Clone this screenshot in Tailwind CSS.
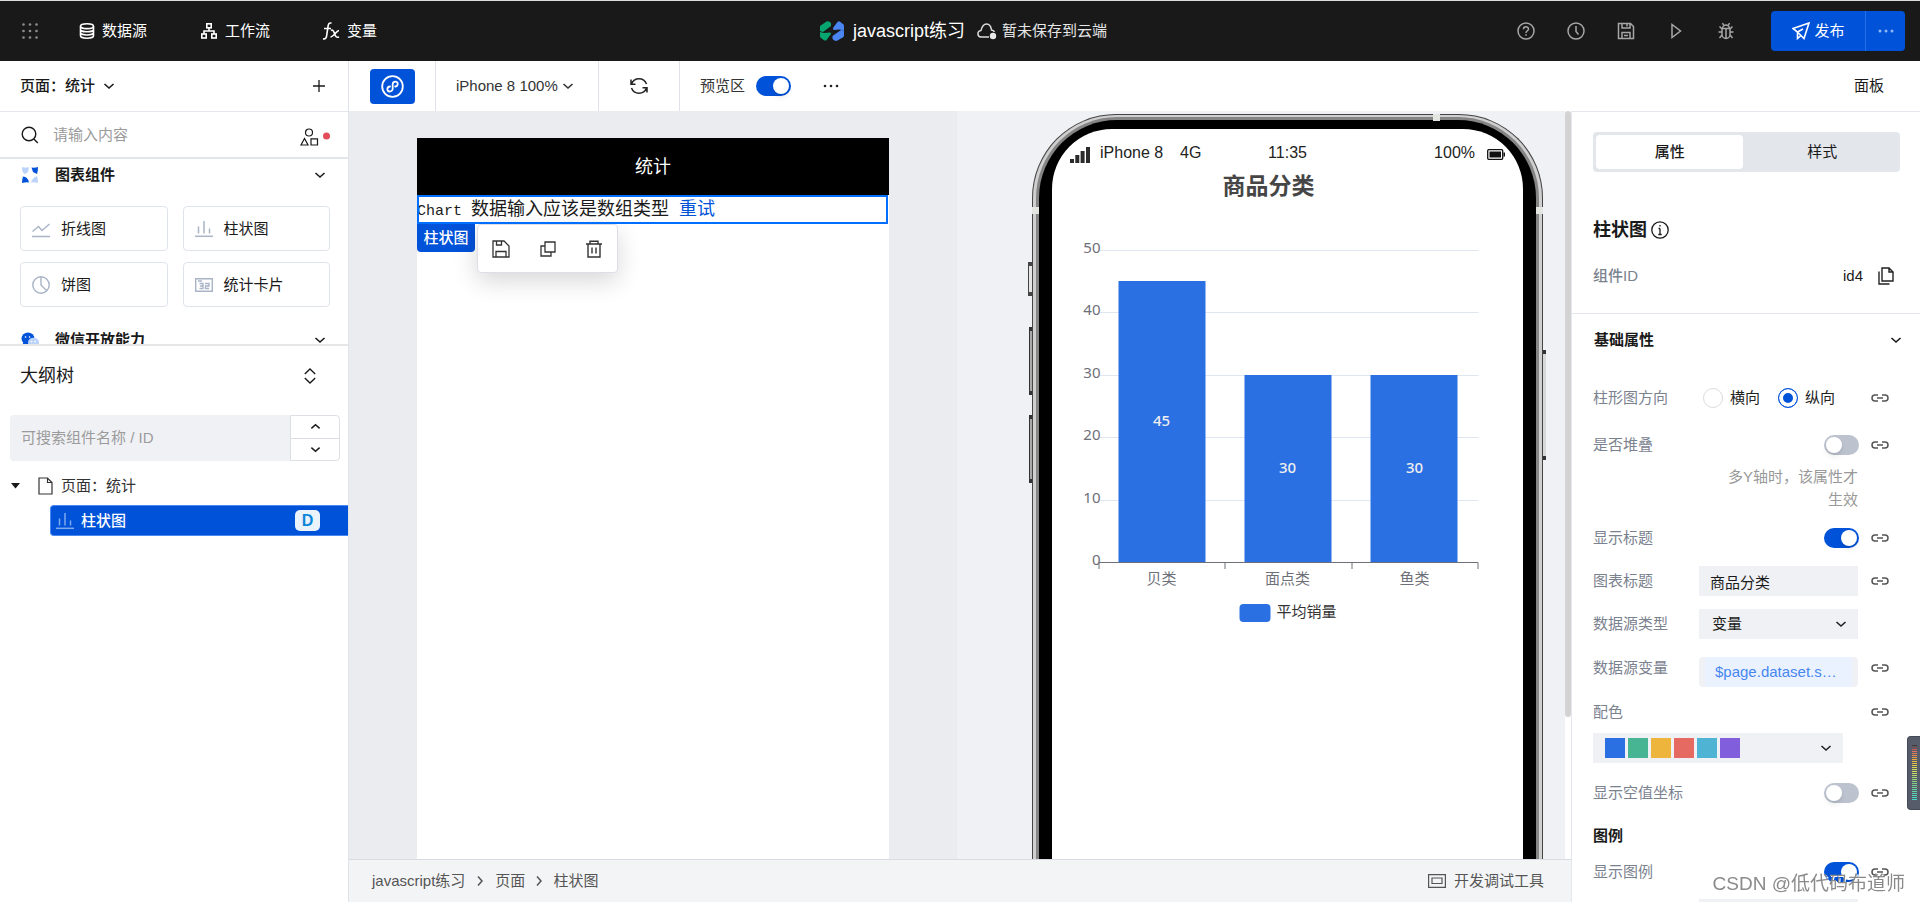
<!DOCTYPE html>
<html lang="zh-CN">
<head>
<meta charset="utf-8">
<title>javascript练习</title>
<script src="https://cdn.jsdelivr.net/npm/@tailwindcss/browser@4"></script>
</head>
<body class="flex h-screen flex-col overflow-hidden bg-white font-['Liberation_Sans','Noto_Sans_CJK_SC',sans-serif] text-[15px] leading-5 text-[#1a1a1a]">

<svg class="hidden" aria-hidden="true">
  <symbol id="down" viewBox="0 0 12 12"><path d="M1.5 4l4.5 4 4.5-4" fill="none" stroke="currentColor" stroke-width="1.6"/></symbol>
  <symbol id="up" viewBox="0 0 12 12"><path d="M1.5 8L6 4l4.500 4" fill="none" stroke="currentColor" stroke-width="1.6"/></symbol>
  <symbol id="right" viewBox="0 0 12 12"><path d="M4 1.500l4 4.500-4 4.500" fill="none" stroke="currentColor" stroke-width="1.500"/></symbol>
  <symbol id="link" viewBox="0 0 18 10"><path d="M7 2H4a3 3 0 000 6h3M11 2h3a3 3 0 010 6h-3M6 5h6" fill="none" stroke="currentColor" stroke-width="1.500"/></symbol>
  <symbol id="bars" viewBox="0 0 18 18"><path d="M3.500 6.500v7M9 1v12.500M14.500 8.500v5" fill="none" stroke="currentColor" stroke-width="1.500"/><path d="M0 16.300h18" stroke="currentColor" stroke-width="1.500"/></symbol>
</svg>

<header class="flex h-[61px] shrink-0 items-center border-t border-[#d9dedb] bg-[#191919] text-white">
  <nav class="flex flex-1 items-center pl-[22px]">
    <button aria-label="菜单" class="mr-[41px]"><svg class="size-4" viewBox="0 0 16 16" fill="#8d8d8d"><circle cx="1.500" cy="1.500" r="1.300"/><circle cx="8" cy="1.500" r="1.300"/><circle cx="14.500" cy="1.500" r="1.300"/><circle cx="1.500" cy="8" r="1.300"/><circle cx="8" cy="8" r="1.300"/><circle cx="14.500" cy="8" r="1.300"/><circle cx="1.500" cy="14.500" r="1.300"/><circle cx="8" cy="14.500" r="1.300"/><circle cx="14.500" cy="14.500" r="1.300"/></svg></button>
    <button class="mr-[54px] flex items-center gap-[7px]"><svg class="size-4" viewBox="0 0 16 16" fill="none" stroke="#fff" stroke-width="1.600"><ellipse cx="8" cy="3.200" rx="6.500" ry="2.400"/><path d="M1.500 3.200v9.600c0 1.300 3 2.400 6.500 2.400s6.500-1.100 6.500-2.400V3.200M1.500 6.400c0 1.300 3 2.400 6.500 2.400s6.500-1.100 6.500-2.400M1.500 9.600c0 1.300 3 2.400 6.500 2.400s6.500-1.100 6.500-2.400"/></svg>数据源</button>
    <button class="mr-[52px] flex items-center gap-2"><svg class="size-4" viewBox="0 0 16 16" fill="none" stroke="#fff" stroke-width="1.600"><rect x="5.800" y=".800" width="4.400" height="4"/><rect x=".800" y="11" width="4.400" height="4"/><rect x="10.800" y="11" width="4.400" height="4"/><path d="M8 5v3M3 11V8h10v3"/></svg>工作流</button>
    <button class="flex items-center gap-[7px]"><svg class="h-[18px] w-[18px]" viewBox="0 0 18 18" fill="none" stroke="#fff" stroke-width="1.600"><path d="M9.500 1.300C7.500.500 6.500 1.500 6.100 4L4.500 14.500c-.400 2-1.500 2.800-3.500 2.200M2 6.500h7M9 8.500c1.500-1 2.500 0 3.500 3s2 4.500 4.500 3.500M17 8.500c-2 0-6 6.500-8.500 6.500"/></svg>变量</button>
  </nav>
  <div class="flex shrink-0 items-center">
    <svg class="mr-[9px] h-5 w-6" viewBox="0 0 24 20"><path d="M0 6.500V5L6.500.500Q8-.300 9.500.700L11 2v3L3 11 0 10z" fill="#07a670"/><path d="M0 11l4 1 6.500-.500L11 13l-4.500 6q-1 1-2.500.200L1 17q-1-.700-1-2z" fill="#07a670"/><path d="M13 7l4.500-6q1-1.300 2.500-.300L23 3q1 .700 1 2v5l-4-1.500L13.500 9z" fill="#4a86f2"/><path d="M24 10v4.500q0 1-1 1.800L17.500 19.500q-1.500.800-3 0L12.500 18v-3L21 9z" fill="#4a86f2"/></svg>
    <h1 class="text-lg">javascript练习</h1>
    <svg class="ml-3 mr-[5px] h-[18px] w-5" viewBox="0 0 20 18"><path d="M12 15H4.500a3.300 3.300 0 01-.500-6.600C5 4.500 7 2 9.500 2s4.500 2.300 5 6c1.500.200 2.500 1 3 2" fill="none" stroke="#ddd" stroke-width="1.500"/><circle cx="16" cy="14" r="3.200" fill="#e8e8e8"/></svg>
    <span class="text-[#e6e6e6]">暂未保存到云端</span>
  </div>
  <div class="flex flex-1 items-center justify-end gap-[32px] pr-[15px] text-[#a6a6a6]">
    <button aria-label="帮助"><svg class="size-[18px]" viewBox="0 0 18 18" fill="none" stroke="currentColor" stroke-width="1.500"><circle cx="9" cy="9" r="8"/><path d="M6.500 7.200c0-3.300 5-3.200 5-.200 0 1.800-2.500 1.700-2.500 4M9 12.300v1.500"/></svg></button>
    <button aria-label="历史"><svg class="size-[18px]" viewBox="0 0 18 18" fill="none" stroke="currentColor" stroke-width="1.500"><circle cx="9" cy="9" r="8"/><path d="M9 4v5.500l2.500 3"/></svg></button>
    <button aria-label="保存"><svg class="size-[18px]" viewBox="0 0 18 18" fill="none" stroke="currentColor" stroke-width="1.500"><path d="M1.500 1.500h12l3 3v12h-15zM5 1.500v4.500h8v-4.500M5 16.500v-6h8v6M10 2v2.500M7 13.500h4"/></svg></button>
    <button aria-label="运行"><svg class="size-[18px]" viewBox="0 0 18 18" fill="none" stroke="currentColor" stroke-width="1.500"><path d="M5 2.500v13l8.500-6.500z"/></svg></button>
    <button aria-label="调试"><svg class="size-[18px]" viewBox="0 0 18 18" fill="none" stroke="currentColor" stroke-width="1.500"><path d="M5 6.500h8v6a4 4 0 01-8 0zM5.500 6.500a3.500 3.500 0 017 0M9 7v9M5 10H1.500M16.500 10H13M5 7L2.500 4.500M13 7l2.500-2.500M5 13l-2.500 3M13 13l2.500 3M6.500 3L5.500 1M11.500 3l1-2"/></svg></button>
    <div class="ml-1 flex h-10 w-[134px] overflow-hidden rounded bg-[#0052d9] text-white">
      <button class="flex flex-1 items-center justify-center gap-[5px]"><svg class="size-[18px]" viewBox="0 0 18 18" fill="none" stroke="currentColor" stroke-width="1.600"><path d="M17 1L1 6.500l4.500 3.500L12 16.500zM5.500 10v6.500L9 13.500M5.500 10L11 7"/></svg>发布</button>
      <button aria-label="更多" class="flex w-10 items-center justify-center border-l border-[#266fe8]"><svg class="h-1 w-4" viewBox="0 0 16 4" fill="#8fb6f5"><circle cx="2" cy="2" r="1.500"/><circle cx="8" cy="2" r="1.500"/><circle cx="14" cy="2" r="1.500"/></svg></button>
    </div>
  </div>
</header>

<div class="flex min-h-0 flex-1">
  <!-- component library and outline -->
  <aside class="flex w-[349px] shrink-0 flex-col border-r border-[#dfe2e8]">
    <div class="flex h-[51px] shrink-0 items-center border-b border-[#e4e7ed] pl-5 pr-[23px]">
      <button class="flex items-center gap-2 font-medium">页面：统计<svg class="size-3"><use href="#down"/></svg></button>
      <button aria-label="新建" class="ml-auto"><svg class="size-3" viewBox="0 0 12 12" stroke="#1a1a1a" stroke-width="1.300"><path d="M6 0v12M0 6h12"/></svg></button>
    </div>
    <label class="flex h-[47px] shrink-0 items-center border-b-2 border-[#e2e6ec] pl-[21px] pr-[18px]">
      <svg class="mr-[14px] size-[18px]" viewBox="0 0 18 18" fill="none" stroke="#1a1a1a" stroke-width="1.400"><circle cx="8" cy="8" r="6.800"/><path d="M12.800 13l4 4"/></svg>
      <input aria-label="搜索组件" placeholder="请输入内容" class="min-w-0 flex-1 outline-none placeholder:text-[#9b9b9b]">
      <svg class="mt-1 h-[18px] w-[30px]" viewBox="0 0 30 18" fill="none" stroke="#1a1a1a" stroke-width="1.200"><circle cx="9" cy="4.500" r="3.500"/><path d="M4.500 10.500L1 17h7zM11 10.800h6.500V17H11z"/><circle cx="26.500" cy="8" r="3.500" fill="#e34d59" stroke="none"/></svg>
    </label>
    <div class="flex h-[187px] shrink-0 flex-col overflow-hidden border-b-2 border-[#e5e6e8] pl-5 pr-[18px]">
      <button class="flex h-8 shrink-0 items-center font-bold"><svg class="ml-[2px] mr-[17px] size-4" viewBox="0 0 16 16"><path d="M0 0q4 1 7 0L6 5 3 7Q0 6 0 0z" fill="#bbd3fb"/><path d="M16 0q-3 1-6.500.500L11 5l4 2q1-3 1-7z" fill="#0052d9"/><path d="M0 16q4-1 7-.500Q6 10 1 9.500 0 12 0 16z" fill="#0052d9"/><path d="M16 16q-3-1-7-.500Q10 11 15 9q1 3 1 7z" fill="#bbd3fb"/></svg>图表组件<svg class="ml-auto mr-1 size-3"><use href="#down"/></svg></button>
      <div class="mt-[15px] grid shrink-0 grid-cols-2 gap-x-[15px] gap-y-[11px]">
        <button class="flex h-[45px] items-center gap-[11px] rounded border border-[#dfe3ea] pl-[11px]"><svg class="size-[18px] text-[#a9b4c6]" viewBox="0 0 18 18" fill="none" stroke="currentColor" stroke-width="1.400"><path d="M.500 11.500l6-5 3.500 4 7.500-6.500M0 16.500h18"/></svg>折线图</button>
        <button class="flex h-[45px] items-center gap-[11px] rounded border border-[#dfe3ea] pl-[11px]"><svg class="size-[18px] text-[#a9b4c6]"><use href="#bars"/></svg>柱状图</button>
        <button class="flex h-[45px] items-center gap-[11px] rounded border border-[#dfe3ea] pl-[11px]"><svg class="size-[18px] text-[#a9b4c6]" viewBox="0 0 18 18" fill="none" stroke="currentColor" stroke-width="1.400"><circle cx="9" cy="9" r="8.200"/><path d="M9 1v8l6 6"/></svg>饼图</button>
        <button class="flex h-[45px] items-center gap-[11px] rounded border border-[#dfe3ea] pl-[11px]"><svg class="size-[18px] text-[#a9b4c6]" viewBox="0 0 18 18" fill="none" stroke="currentColor" stroke-width="1.400"><path d="M.700 2.700h16.600v12.600H.700zM3 5h4M4.500 7.500h3.500v5H4.500M5 10h3M10 7.500h4V10h-3.500v2.500H14"/></svg>统计卡片</button>
      </div>
      <button class="mt-4 flex h-[34px] shrink-0 items-center font-bold"><svg class="ml-[1px] mr-4 h-4 w-[18px]" viewBox="0 0 18 16"><ellipse cx="7" cy="6.500" rx="6.500" ry="6" fill="#0052d9"/><path d="M1 14l1.500-4 3 2z" fill="#0052d9"/><ellipse cx="12.500" cy="10.500" rx="5.500" ry="4.800" fill="#bbd3fb"/><path d="M4.500 5h.100M8.500 5h.100M10.500 9.500h.100M14 9.500h.100" stroke="#fff" stroke-width="1.600" stroke-linecap="round"/></svg>微信开放能力<svg class="ml-auto mr-1 size-3"><use href="#down"/></svg></button>
    </div>
    <div class="flex h-[60px] shrink-0 items-center justify-between pl-5 pr-8">
      <h2 class="text-lg">大纲树</h2>
      <button aria-label="展开"><svg class="h-4 w-3" viewBox="0 0 12 16" fill="none" stroke="#1a1a1a" stroke-width="1.400"><path d="M.800 6L6 1l5.200 5M.800 10L6 15l5.200-5"/></svg></button>
    </div>
    <div class="ml-[10px] mr-2 mt-[9px] flex h-[46px] shrink-0">
      <input aria-label="搜索大纲" placeholder="可搜索组件名称 / ID" class="min-w-0 flex-1 rounded-l bg-[#f0f1f5] px-[11px] outline-none placeholder:text-[#9b9b9b]">
      <div class="flex w-[50px] flex-col divide-y divide-[#d9dce1] rounded-r border border-[#dcdfe4]">
        <button aria-label="上一个" class="flex flex-1 items-center justify-center"><svg class="size-[11px]"><use href="#up"/></svg></button>
        <button aria-label="下一个" class="flex flex-1 items-center justify-center"><svg class="size-[11px]"><use href="#down"/></svg></button>
      </div>
    </div>
    <ul class="mt-[7px]">
      <li class="flex h-9 items-center pl-[11px] text-[#333]"><svg class="mr-[18px] h-[6px] w-[9px]" viewBox="0 0 9 6"><path d="M0 0h9L4.500 5.500z" fill="#1a1a1a"/></svg><svg class="mr-[8px] h-[18px] w-[15px]" viewBox="0 0 15 18" fill="none" stroke="#333" stroke-width="1.200"><path d="M1 1h8.500L14 5.500V17H1zM9.500 1v4.500H14"/></svg>页面：统计</li>
      <li class="ml-[50px] mt-px flex h-[31px] items-center rounded-l-sm border-y border-l border-[#4a8af0] bg-[#0052d9] pl-[5px] font-medium text-white"><svg class="mr-[7px] size-[18px] text-[#7fa9ee]"><use href="#bars"/></svg>柱状图<span class="ml-auto mr-7 flex h-[21px] w-[25px] items-center justify-center rounded-[5px] bg-[#eaf3fb] text-base font-bold text-[#0a86d8]">D</span></li>
    </ul>
  </aside>

  <main class="flex min-w-0 flex-1 flex-col">
    <div class="flex h-[50px] shrink-0 items-center text-[#333]">
      <div class="flex h-full w-[87px] items-center justify-center border-r border-[#dfe2e8]"><button aria-label="小程序" class="flex h-[35px] w-[45px] items-center justify-center rounded bg-[#0052d9]"><svg class="size-[23px]" viewBox="0 0 23 23" fill="none" stroke="#fff" stroke-width="1.800"><circle cx="11.500" cy="11.500" r="10.300"/><path d="M9 11.500c-3 0-3.800 4.800-.500 5 2 .100 3.200-1.200 3.200-3V9.500c0-1.900 1.200-3.100 3-2.900 3 .300 2.500 4.700-.500 4.900" stroke-linecap="round"/></svg></button></div>
      <label class="relative flex h-full w-[163px] items-center border-r border-[#dfe2e8] pl-5"><select aria-label="设备" class="w-[118px] appearance-none bg-transparent outline-none"><option>iPhone 8 100%</option></select><svg class="absolute right-6 size-3"><use href="#down"/></svg></label>
      <div class="flex h-full w-[81px] items-center justify-center border-r border-[#dfe2e8]"><button aria-label="刷新"><svg class="h-[18px] w-5" viewBox="0 0 20 18" fill="none" stroke="#222" stroke-width="1.500"><path d="M2.500 7A8 8 0 0117.500 7M17.500 11A8 8 0 012.500 11M2 2.500v4.800h4.500M18 15.500v-4.800h-4.500"/></svg></button></div>
      <label class="flex items-center gap-[11px] pl-5">预览区<input type="checkbox" checked class="h-5 w-[35px] appearance-none rounded-full bg-[#bcc3cf] before:ml-0.5 before:mt-0.5 before:block before:size-4 before:rounded-full before:bg-white before:shadow-md before:content-[''] checked:bg-[#0052d9] checked:before:ml-[17px]"></label>
      <button aria-label="更多" class="ml-8"><svg class="h-1 w-4" viewBox="0 0 16 4" fill="#222"><circle cx="2" cy="2" r="1.300"/><circle cx="8" cy="2" r="1.300"/><circle cx="14" cy="2" r="1.300"/></svg></button>
    </div>
    <div class="flex min-h-0 flex-1">
      <div class="grid min-w-0 flex-1 grid-cols-2 overflow-hidden">
      <section class="flex min-w-0 justify-center bg-[#ebecf0] pt-[27px]">
        <div class="w-[472px] bg-white">
          <div class="flex h-[57px] items-center justify-center bg-black text-lg text-white">统计</div>
          <div class="mr-px flex h-[29px] items-baseline leading-[29px] outline-2 -outline-offset-2 outline-[#006eff]">
            <span class="font-['Liberation_Mono',monospace] text-[15px]">Chart</span><span class="ml-[9px] text-lg leading-[29px]">数据输入应该是数组类型</span><a href="#" class="ml-[10px] text-lg leading-[29px] text-[#0052d9]">重试</a>
          </div>
          <div class="flex gap-[2px]">
            <span class="flex h-7 w-[58px] items-center justify-center rounded-b bg-[#0052d9] font-medium text-white">柱状图</span>
            <div class="flex h-[49px] w-[141px] items-center justify-between rounded border border-[#dcdfe8] bg-white px-[14px] shadow-[0_8px_24px_rgba(0,0,0,0.16)]">
              <button aria-label="保存"><svg class="size-[18px]" viewBox="0 0 18 18" fill="none" stroke="#333" stroke-width="1.300"><path d="M1 1h11l5 5v11H1zM4.500 1v4h5V1M4 17v-5.500h10V17"/></svg></button>
              <button aria-label="复制"><svg class="size-[16px]" viewBox="0 0 16 16" fill="none" stroke="#333" stroke-width="1.300"><path d="M5 1h10v10H5zM5 5H1v10h10v-4"/></svg></button>
              <button aria-label="删除"><svg class="size-[18px]" viewBox="0 0 18 18" fill="none" stroke="#333" stroke-width="1.400"><path d="M1 4h16M5 4V1.200h8V4M3 4v13h12V4M7 7.500v6M11 7.500v6"/></svg></button>
            </div>
          </div>
        </div>
      </section>
      <section class="flex min-w-0 justify-end bg-[#f0f1f5] pr-[22px] pt-[3px]">
        <!-- phone frame -->
        <div class="relative flex w-[511px] rounded-t-[84px] border border-b-0 border-[#444] bg-[#cfcfcf] px-[3px] pt-[2px]">
          <i class="absolute -left-[5px] top-[147px] h-[34px] w-1 border-y-4 border-l border-[#444] bg-[#e6e6e6]"></i>
          <i class="absolute -left-[4px] top-[212px] h-[68px] w-[3px] border-y-4 border-l border-[#333] bg-[#aaa]"></i>
          <i class="absolute -left-[4px] top-[300px] h-[68px] w-[3px] border-y-4 border-l border-[#333] bg-[#aaa]"></i>
          <i class="absolute -right-[4px] top-[235px] h-[110px] w-[3px] border-y-4 border-[#333] bg-[#d8d8d8]"></i>
          <i class="absolute -left-px top-[92px] h-[7px] w-[7px] bg-[#e3e5e0]"></i>
          <i class="absolute -right-px top-[92px] h-[7px] w-[7px] bg-[#e3e5e0]"></i>
          <i class="absolute -top-px right-[102px] h-[7px] w-[7px] bg-[#e3e5e0]"></i>
          <div class="flex flex-1 rounded-t-[81px] border-x-3 border-t-3 border-[#858585] bg-black px-[13px] pt-[9px]">
            <div class="min-w-0 flex-1 rounded-t-[60px] bg-white pt-[12px]">
              <div class="flex h-6 items-center px-[18px] text-base text-[#222]">
                <div class="flex flex-1 items-center"><svg class="mr-[10px] mt-[3px] h-4 w-5" viewBox="0 0 20 16" fill="#2b2b2b"><path d="M0 12h4v4H0zM5.300 8h4v8h-4zM10.600 4h4v12h-4zM16 0h4v16h-4z"/></svg><span class="w-20">iPhone 8</span><span>4G</span></div>
                <span>11:35</span>
                <div class="flex flex-1 items-center justify-end gap-3"><span>100%</span><svg class="mt-[2px] h-[11px] w-[18px]" viewBox="0 0 18 11"><rect x=".700" y=".700" width="15" height="9.600" rx="1" fill="none" stroke="#111" stroke-width="1.300"/><path d="M2.500 2.500h11.500v6H2.500zM16.500 3.500h1.500v4h-1.500z" fill="#111"/></svg></div>
              </div>
              <svg class="h-[470px] w-full font-['Noto_Sans','Noto_Sans_CJK_SC',sans-serif] text-[15px]" viewBox="0 0 470 470" role="img" aria-label="商品分类">
                <text x="216" y="29" text-anchor="middle" class="text-[23px] font-bold" fill="#464646">商品分类</text>
                <path d="M47 85.500h379M47 147.500h379M47 210.500h379M47 272.500h379M47 335.500h379" stroke="#e0e6f1"/>
                <g fill="#2a70e3"><path d="M66 116h87v282H66zM192 210h87v188h-87zM318 210h87v188h-87z"/><rect x="187" y="439" width="31" height="18" rx="4"/></g>
                <path d="M46.500 404v-6.500h379v6.500M172.500 398v6M299.500 398v6" fill="none" stroke="#6e7079"/>
                <g fill="#6e7079"><g text-anchor="end"><text x="48" y="88">50</text><text x="48" y="150">40</text><text x="48" y="213">30</text><text x="48" y="275">20</text><text x="48" y="338">10</text><text x="48" y="400">0</text></g>
                <g text-anchor="middle"><text x="109" y="419">贝类</text><text x="235" y="419">面点类</text><text x="362" y="419">鱼类</text></g></g>
                <g fill="#eee" text-anchor="middle" class="font-medium"><text x="109" y="261">45</text><text x="235" y="308">30</text><text x="362" y="308">30</text></g>
                <text x="224" y="452" fill="#333">平均销量</text>
              </svg>
            </div>
          </div>
        </div>
      </section>
      </div>
      <div class="w-[6px] shrink-0"><div class="h-[606px] rounded-full bg-[#d3d3d3]"></div></div>
    </div>
    <footer class="flex h-[43px] shrink-0 items-center border-t border-[#d8dbe2] bg-[#f3f4f6] pl-[23px] pr-[27px] text-[#555]">
      <a href="#">javascript练习</a><svg class="mx-[9px] size-3"><use href="#right"/></svg><a href="#">页面</a><svg class="mx-[8px] size-3"><use href="#right"/></svg><a href="#">柱状图</a>
      <button class="ml-auto flex items-center gap-2"><svg class="h-[14px] w-[18px]" viewBox="0 0 18 14" fill="none" stroke="#555" stroke-width="1.200"><path d="M.600.600h16.800v12.800H.600zM4 4h10v5.500H4z"/></svg>开发调试工具</button>
    </footer>
  </main>

  <!-- property panel -->
  <aside class="flex w-[349px] shrink-0 flex-col">
    <div class="flex h-[51px] shrink-0 items-center justify-end border-b border-[#e4e7ed] pr-9"><button>面板</button></div>
    <div class="flex min-h-0 flex-1 flex-col overflow-hidden border-l border-[#e4e7ed]">
      <div class="ml-[21px] mr-5 mt-5 flex h-[40px] shrink-0 rounded bg-[#e3e6eb] p-[3px]">
        <button class="w-[49%] rounded-sm bg-white font-medium">属性</button><button class="flex-1 pl-1">样式</button>
      </div>
      <div class="ml-[21px] mt-11 flex h-7 shrink-0 items-center gap-1"><h2 class="text-lg font-bold">柱状图</h2><svg class="size-[18px]" viewBox="0 0 18 18" fill="none" stroke="#1a1a1a" stroke-width="1.300"><circle cx="9" cy="9" r="8.200"/><path d="M9 4v1.600M9 7.500v6M7.500 7.500H9M7.300 13.500h3.400"/></svg></div>
      <div class="ml-[21px] mr-[26px] mt-[18px] flex h-7 shrink-0 items-center"><span class="flex-1 font-medium text-[#7b828f]">组件ID</span><span>id4</span><button aria-label="复制ID" class="ml-[15px]"><svg class="h-[18px] w-4" viewBox="0 0 16 18" fill="none" stroke="#222" stroke-width="1.400"><path d="M4 1h7l4 4v9H4zM11 1v4h4M1 4.500V17h10.500"/></svg></button></div>
      <div class="mt-[23px] flex h-[52px] shrink-0 items-center justify-between border-t border-[#e4e7ed] pl-[22px] pr-[18px]"><h3 class="font-bold">基础属性</h3><svg class="size-3"><use href="#down"/></svg></div>
      <div class="ml-[21px] mr-[31px] mt-[6px] flex shrink-0 flex-col text-[#7b828f]">
        <div class="flex h-[54px] items-center"><span class="w-[110px]">柱形图方向</span>
          <label class="flex items-center gap-[7px] text-[#222]"><input type="radio" name="dir" class="size-5 appearance-none rounded-full border border-[#dcdcdc]">横向</label>
          <label class="ml-[18px] flex items-center gap-[7px] text-[#222]"><input type="radio" name="dir" checked class="size-5 appearance-none rounded-full border border-[#0052d9] bg-[#0052d9] shadow-[inset_0_0_0_4px_#fff]">纵向</label>
          <svg class="ml-auto h-[10px] w-[18px] text-[#555]"><use href="#link"/></svg></div>
        <label class="flex h-10 items-center"><span class="flex-1">是否堆叠</span><input type="checkbox" class="h-5 w-[35px] appearance-none rounded-full bg-[#bcc3cf] before:ml-0.5 before:mt-0.5 before:block before:size-4 before:rounded-full before:bg-white before:shadow-md before:content-[''] checked:bg-[#0052d9] checked:before:ml-[17px]"><svg class="ml-3 h-[10px] w-[18px] text-[#555]"><use href="#link"/></svg></label>
        <p class="mb-[5px] ml-[122px] mr-[31px] text-right leading-[23px] text-[#999]">多Y轴时，该属性才生效</p>
        <label class="flex h-11 items-center"><span class="flex-1">显示标题</span><input type="checkbox" checked class="h-5 w-[35px] appearance-none rounded-full bg-[#bcc3cf] before:ml-0.5 before:mt-0.5 before:block before:size-4 before:rounded-full before:bg-white before:shadow-md before:content-[''] checked:bg-[#0052d9] checked:before:ml-[17px]"><svg class="ml-3 h-[10px] w-[18px] text-[#555]"><use href="#link"/></svg></label>
        <label class="flex h-[42px] items-center"><span class="w-[106px]">图表标题</span><input value="商品分类" class="h-[30px] min-w-0 flex-1 bg-[#f0f1f5] px-[11px] text-[#1a1a1a] outline-none"><svg class="ml-[13px] h-[10px] w-[18px] text-[#555]"><use href="#link"/></svg></label>
        <label class="relative flex h-11 items-center"><span class="w-[106px]">数据源类型</span><select class="mr-[31px] h-[30px] min-w-0 flex-1 appearance-none bg-[#f0f1f5] px-[13px] text-[#1a1a1a] outline-none"><option>变量</option></select><svg class="absolute right-[42px] size-3 text-[#222]"><use href="#down"/></svg></label>
        <div class="flex h-11 items-center"><span class="w-[106px]">数据源变量</span><button class="mt-2 h-[30px] flex-1 rounded bg-[#f0f1f5] px-[6px]"><span class="block bg-[#ebf2ff] px-[10px] text-left leading-[30px] text-[#4787f0]">$page.dataset.s…</span></button><svg class="ml-[13px] h-[10px] w-[18px] text-[#555]"><use href="#link"/></svg></div>
        <div class="flex h-[43px] items-center justify-between"><span>配色</span><svg class="h-[10px] w-[18px] text-[#555]"><use href="#link"/></svg></div>
        <button aria-label="配色方案" class="mr-[46px] flex h-[30px] items-center gap-[3px] bg-[#f0f1f5] pl-3 pr-[11px]"><i class="size-5 bg-[#2a70e3]"></i><i class="size-5 bg-[#48b592]"></i><i class="size-5 bg-[#eeb53c]"></i><i class="size-5 bg-[#e56a61]"></i><i class="size-5 bg-[#4fb3d3]"></i><i class="size-5 bg-[#815fdc]"></i><svg class="ml-auto size-3 text-[#222]"><use href="#down"/></svg></button>
        <label class="flex h-[60px] items-center"><span class="flex-1">显示空值坐标</span><input type="checkbox" class="h-5 w-[35px] appearance-none rounded-full bg-[#bcc3cf] before:ml-0.5 before:mt-0.5 before:block before:size-4 before:rounded-full before:bg-white before:shadow-md before:content-[''] checked:bg-[#0052d9] checked:before:ml-[17px]"><svg class="ml-3 h-[10px] w-[18px] text-[#555]"><use href="#link"/></svg></label>
        <h3 class="h-[26px] font-bold leading-[26px] text-[#1a1a1a]">图例</h3>
        <label class="flex h-[45px] items-center"><span class="flex-1">显示图例</span><input type="checkbox" checked class="h-5 w-[35px] appearance-none rounded-full bg-[#bcc3cf] before:ml-0.5 before:mt-0.5 before:block before:size-4 before:rounded-full before:bg-white before:shadow-md before:content-[''] checked:bg-[#0052d9] checked:before:ml-[17px]"><svg class="ml-3 h-[10px] w-[18px] text-[#555]"><use href="#link"/></svg></label>
        <div class="ml-[106px] mr-[31px] mt-[5px] h-[30px] bg-[#f0f1f5]"></div>
      </div>
    </div>
  </aside>
</div>

<!-- floating level meter -->
<div class="fixed right-0 top-[736px] flex h-[74px] w-[13px] items-center justify-center rounded-l-[4px] border border-r-0 border-[#444a55] bg-[#565c69]">
  <div class="h-14 w-[5px] bg-[repeating-linear-gradient(to_bottom,transparent_0_1px,#565c69_1px_2px),linear-gradient(to_bottom,#333,#e56a61_10%,#eeb53c_28%,#d9e05a_45%,#7fd08a_70%,#3fe0d0)]"></div>
</div>
<div class="fixed bottom-1 right-[15px] text-[19px] leading-7 text-[#8a8a8a] [text-shadow:1px_1px_0_#fff]">CSDN @低代码布道师</div>
</body>
</html>
